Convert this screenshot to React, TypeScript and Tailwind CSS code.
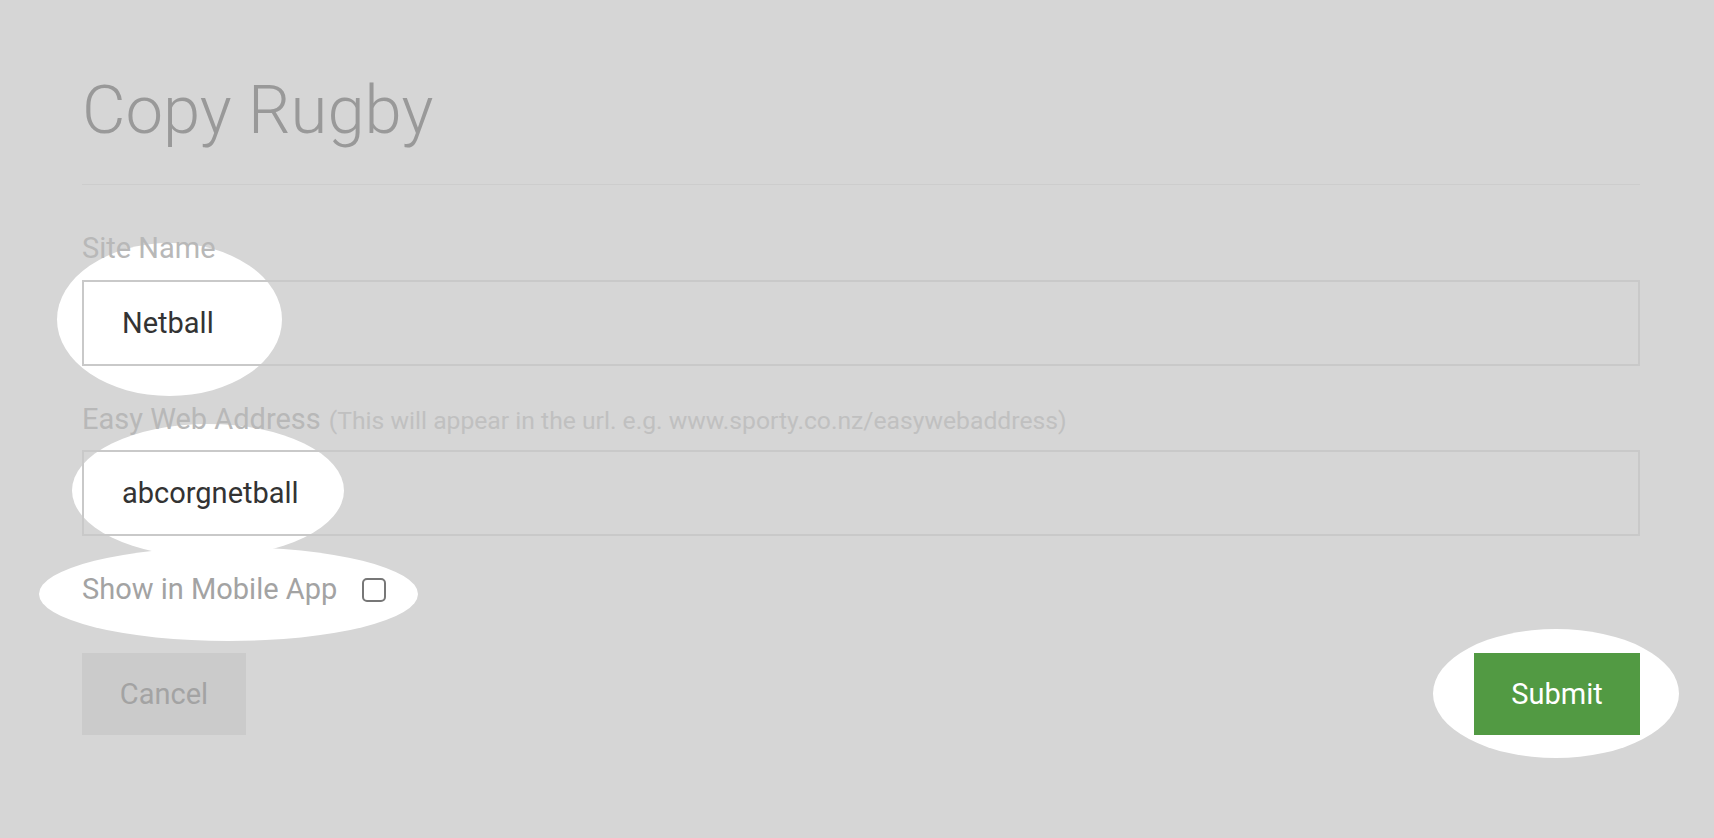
const spots = [
  "left-[57px] top-[243px] w-[225px] h-[153px]",
  "left-[72px] top-[424px] w-[272px] h-[133px]",
  "left-[39px] top-[547px] w-[379px] h-[94px]",
  "left-[1433px] top-[629px] w-[246px] h-[129px]",
];

function Field({ value }: { value: string }) {
  return (
    <div className="flex h-[86px] items-center border-2 border-[#c9c9c9] pl-[38px] text-[29px] leading-none text-[#333]">
      {value}
    </div>
  );
}

export default function App() {
  return (
    <div className="relative min-h-[838px] overflow-hidden bg-[#d6d6d6] font-['Roboto',sans-serif]">
      {/* highlight ellipses drawn over the dimmed page */}
      {spots.map((cls) => (
        <div key={cls} className={`absolute rounded-[50%] bg-white ${cls}`} />
      ))}

      <div className="relative flex flex-col pl-[82px] pr-[74px] pt-[77px]">
        <h1 className="text-[67px] font-light leading-none text-[#999]">Copy Rugby</h1>
        <div className="mt-[40px] h-px bg-[#cdcdcd]" />

        <label className="mt-[49px] text-[29px] leading-none text-[#b8b8b8]">Site Name</label>
        <div className="mt-[17px]">
          <Field value="Netball" />
        </div>

        <div className="mt-[39px] flex items-baseline gap-[8px] leading-none">
          <span className="text-[29px] text-[#b8b8b8]">Easy Web Address</span>
          <span className="text-[24.7px] text-[#c0c0c0]">
            (This will appear in the url. e.g. www.sporty.co.nz/easywebaddress)
          </span>
        </div>
        <div className="mt-[16px]">
          <Field value="abcorgnetball" />
        </div>

        <div className="mt-[39px] flex items-center gap-[25px]">
          <span className="text-[29px] leading-none text-[#a3a3a3]">Show in Mobile App</span>
          <span className="h-[24px] w-[24px] rounded-[5px] border-2 border-[#777]" />
        </div>

        <div className="mt-[49px] flex items-center justify-between">
          <button
            type="button"
            className="h-[82px] w-[164px] bg-[#cbcbcb] text-[29px] leading-none text-[#a3a3a3]"
          >
            Cancel
          </button>
          <button
            type="button"
            className="h-[82px] w-[166px] bg-[#529a43] text-[29px] leading-none text-white"
          >
            Submit
          </button>
        </div>
      </div>
    </div>
  );
}
